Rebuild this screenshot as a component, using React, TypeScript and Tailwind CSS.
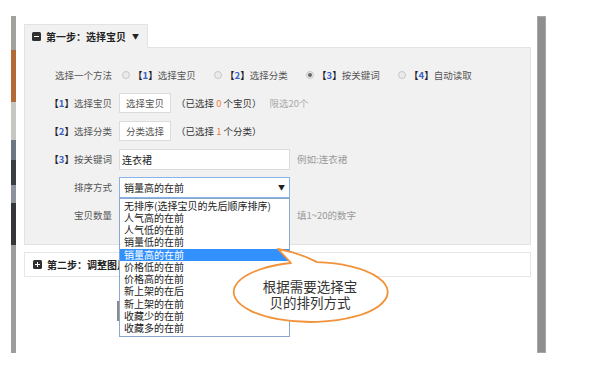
import React from 'react';

const Num: React.FC<{ n: string }> = ({ n }) => (
  <span className="font-bold text-[#222]">
    【<span className="text-[#3a62c9]">{n}</span>】
  </span>
);

const Radio: React.FC<{ checked?: boolean }> = ({ checked }) => (
  <span className="w-[8px] h-[8px] shrink-0 rounded-full border border-[#c6c6c6] bg-[#ebebeb] flex items-center justify-center">
    {checked && <span className="w-[4px] h-[4px] rounded-full bg-[#666]" />}
  </span>
);

const SquareIcon: React.FC<{ plus?: boolean }> = ({ plus }) => (
  <span className="relative w-[9px] h-[9px] rounded-[1.5px] bg-[#2f2f2f] flex items-center justify-center">
    <span className="w-[5px] h-[1.5px] bg-white" />
    {plus && <span className="absolute w-[1.5px] h-[5px] bg-white" />}
  </span>
);

const options = [
  '无排序(选择宝贝的先后顺序排序)',
  '人气高的在前',
  '人气低的在前',
  '销量低的在前',
  '销量高的在前',
  '价格低的在前',
  '价格高的在前',
  '新上架的在后',
  '新上架的在前',
  '收藏少的在前',
  '收藏多的在前',
];

const Row: React.FC<{ label: React.ReactNode; children: React.ReactNode }> = ({ label, children }) => (
  <div className="h-[28px] flex items-center">
    <div className="w-[87px] text-right text-[#555]">{label}</div>
    <div className="ml-[7px] flex items-center">{children}</div>
  </div>
);

export default function App() {
  return (
    <div className="w-[590px] h-[371px] bg-white overflow-hidden font-['Noto_Sans_CJK_SC','Noto_Sans',sans-serif]">
      <div className="flex pt-4 pl-[11px]">
        {/* photo strip at the left edge */}
        <div className="w-[5px] h-[337px] flex flex-col">
          <div className="h-[34px] bg-[#a3a19e]" />
          <div className="h-[52px] bg-[#b36a35]" />
          <div className="h-[38px] bg-[#c6c9c2]" />
          <div className="h-[20px] bg-[#6f7882]" />
          <div className="h-[25px] bg-[#3a3d42]" />
          <div className="h-[18px] bg-[#8c939a]" />
          <div className="h-[42px] bg-[#34363a]" />
          <div className="flex-1 bg-[#9d9d9d]" />
        </div>

        <div className="ml-[8px] w-[507px] pt-2">
          {/* step 1 */}
          <div className="relative z-10 -mb-px w-[124px] h-[24px] bg-[#f1f1f1] border border-b-0 border-[#e3e3e3] flex items-center pl-[7px] gap-[5px]">
            <SquareIcon />
            <span className="text-[10px] font-bold text-[#222]">第一步：选择宝贝</span>
            <span className="text-[7px] text-[#222] ml-[1px]">▼</span>
          </div>
          <div className="h-[198px] bg-[#f1f1f1] border border-[#e3e3e3] pt-[13px] text-[9.5px]">
            <Row label="选择一个方法">
              <div className="flex items-center pl-[3px]">
                <div className="w-[92px] flex items-center gap-[3px]">
                  <Radio />
                  <span className="text-[#555]"><Num n="1" />选择宝贝</span>
                </div>
                <div className="w-[92px] flex items-center gap-[3px]">
                  <Radio />
                  <span className="text-[#555]"><Num n="2" />选择分类</span>
                </div>
                <div className="w-[92px] flex items-center gap-[3px]">
                  <Radio checked />
                  <span className="text-[#555]"><Num n="3" />按关键词</span>
                </div>
                <div className="w-[92px] flex items-center gap-[3px]">
                  <Radio />
                  <span className="text-[#555]"><Num n="4" />自动读取</span>
                </div>
              </div>
            </Row>
            <Row label={<><Num n="1" />选择宝贝</>}>
              <button className="w-[52px] h-[20px] bg-white border border-[#dcdcdc] text-[#555]">选择宝贝</button>
              <span className="ml-[5px] text-[#333]">（已选择 <span className="text-[#f07a3a]">0</span> 个宝贝）</span>
              <span className="ml-[8px] text-[#aaa]">限选20个</span>
            </Row>
            <Row label={<><Num n="2" />选择分类</>}>
              <button className="w-[52px] h-[20px] bg-white border border-[#dcdcdc] text-[#555]">分类选择</button>
              <span className="ml-[5px] text-[#333]">（已选择 <span className="text-[#f07a3a]">1</span> 个分类）</span>
            </Row>
            <Row label={<><Num n="3" />按关键词</>}>
              <div className="w-[171px] h-[21px] bg-white border border-[#dcdcdc] flex items-center pl-[2px] text-[10px] text-[#222]">连衣裙</div>
              <span className="ml-[7px] text-[#999]">例如:连衣裙</span>
            </Row>
            <Row label="排序方式">
              <div className="relative z-20 w-[171px] h-[21px] bg-white border border-[#86b3ea] flex items-center justify-between pl-[4px] pr-[4px] text-[10px] text-[#222]">
                <span>销量高的在前</span>
                <span className="text-[7px]">▼</span>
                <div className="absolute left-[-1px] top-[20px] w-[171px] h-[139px] bg-white border border-[#8aa7cc] text-[10px] leading-[12.25px] text-[#222] pt-px">
                  {options.map((o, i) => (
                    <div key={o} className={i === 4 ? 'bg-[#3391ff] text-white pl-[4px]' : 'pl-[4px]'}>
                      {o}
                    </div>
                  ))}
                </div>
              </div>
            </Row>
            <Row label="宝贝数量">
              <div className="w-[171px] h-[21px] bg-white border border-[#dcdcdc]" />
              <span className="ml-[7px] text-[#999]">填1~20的数字</span>
            </Row>
          </div>

          {/* step 2 */}
          <div className="mt-[7px] h-[25px] bg-white border border-[#e6e6e6] flex items-center pl-[8px] gap-[5px]">
            <SquareIcon plus />
            <span className="text-[10px] font-bold text-[#222]">第二步：调整图片顺序</span>
          </div>
          <div className="mt-[24px] ml-[93px] flex">
            <button className="w-[110px] h-[20px] bg-[#f5f5f5] border-l-2 border-[#8a8a8a]" />
          </div>
        </div>

        <div className="ml-[6px] w-[9px] h-[337px] bg-[#8f8f8f] border border-[#a6a6a6]" />
      </div>

      {/* callout bubble */}
      <div className="absolute left-[225px] top-[244px] z-30 w-[170px] h-[84px]">
        <svg width="170" height="84" viewBox="0 0 170 84" className="absolute inset-0">
          <path
            d="M66 19 A77 30 0 1 0 92 18.1 Q75 9 53 5 L66 19 Z"
            fill="white"
            stroke="#f2923a"
            strokeWidth="1.8"
            strokeLinejoin="round"
          />
        </svg>
        <div className="absolute left-0 top-[34px] w-[170px] text-center text-[13.5px] leading-[16px] text-[#333]">
          <div>根据需要选择宝</div>
          <div>贝的排列方式</div>
        </div>
      </div>
    </div>
  );
}
